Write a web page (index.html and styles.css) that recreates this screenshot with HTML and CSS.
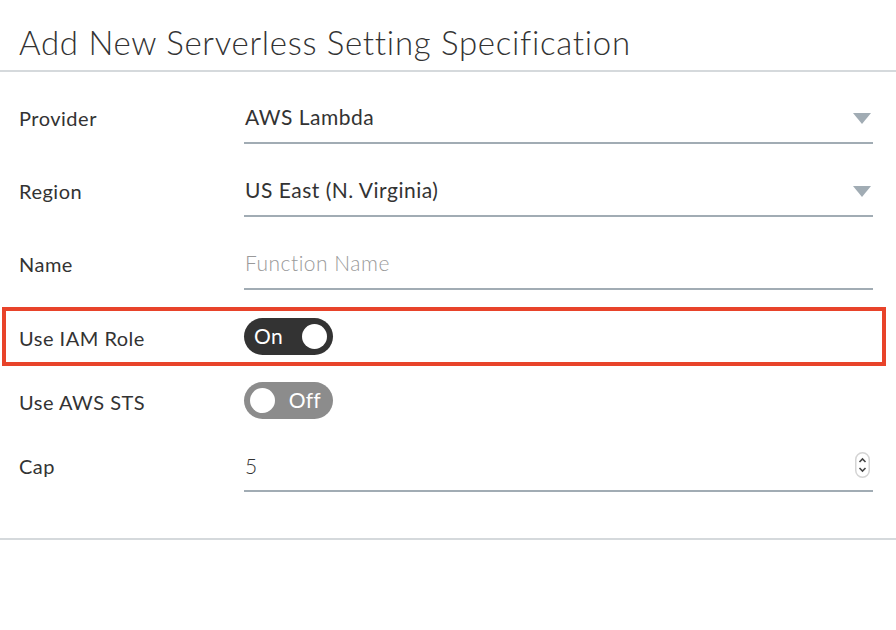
FILE: index.html
```html
<!DOCTYPE html>
<html>
<head>
<meta charset="utf-8">
<link rel="stylesheet" href="styles.css">
</head>
<body>
<div class="dialog">
  <header class="head"><h1 class="title">Add New Serverless Setting Specification</h1></header>
  <form class="form">
    <div class="row field-row">
      <label class="label">Provider</label>
      <div class="field select">
        <span class="value">AWS Lambda</span>
        <span class="caret"></span>
      </div>
    </div>
    <div class="row field-row">
      <label class="label">Region</label>
      <div class="field select">
        <span class="value">US East (N. Virginia)</span>
        <span class="caret"></span>
      </div>
    </div>
    <div class="row field-row">
      <label class="label">Name</label>
      <div class="field">
        <span class="value placeholder">Function Name</span>
      </div>
    </div>
    <div class="row toggle-row highlight">
      <label class="label">Use IAM Role</label>
      <div class="toggle on"><span class="t-text">On</span><span class="knob"></span></div>
    </div>
    <div class="row toggle-row sts">
      <label class="label">Use AWS STS</label>
      <div class="toggle off"><span class="knob"></span><span class="t-text">Off</span></div>
    </div>
    <div class="row field-row cap">
      <label class="label">Cap</label>
      <div class="field">
        <span class="value num">5</span>
        <span class="spinner">
          <svg width="15" height="26" viewBox="0 0 15 26">
            <rect x="0.75" y="0.75" width="13.5" height="24.5" rx="6.75" fill="#fff" stroke="#d4d4d4" stroke-width="1.5"/>
            <path d="M4.5 10 L7.5 7 L10.5 10" fill="none" stroke="#444" stroke-width="1.6"/>
            <path d="M4.5 16 L7.5 19 L10.5 16" fill="none" stroke="#444" stroke-width="1.6"/>
          </svg>
        </span>
      </div>
    </div>
  </form>
  <div class="foot"></div>
</div>
</body>
</html>
```
FILE: styles.css
```css
* { box-sizing: border-box; }
html, body { margin: 0; padding: 0; background: #fff; }
body {
  font-family: Lato, "Open Sans", "Liberation Sans", sans-serif;
  color: #333;
  width: 896px;
  height: 630px;
  overflow: hidden;
}
.head {
  height: 72px;
  border-bottom: 2px solid #d5d9dc;
  padding-left: 19px;
}
.title {
  margin: 0;
  padding-top: 22px;
  font-size: 33px;
  line-height: 40px;
  font-weight: 300;
  color: #333;
  letter-spacing: 0.7px;
}
.form {
  padding-top: 28px;
}
.row {
  display: grid;
  grid-template-columns: 225px 1fr;
  align-items: center;
  padding-left: 19px;
  padding-right: 23px;
}
.label {
  font-size: 20px;
  color: #333;
  letter-spacing: 0.5px;
}
.field-row { height: 44px; margin-bottom: 29px; }
.field-row .label { margin-top: -8px; }
.field {
  position: relative;
  height: 44px;
  border-bottom: 2px solid #a1acb4;
  display: flex;
  align-items: center;
  padding-left: 1px;
}
.value {
  font-size: 21px;
  color: #333;
  margin-top: -10px;
  letter-spacing: 0.5px;
}
.placeholder { color: #9a9a9a; font-weight: 300; }
.num { font-weight: 300; }
.caret {
  position: absolute;
  right: 2px;
  top: 13px;
  width: 0;
  height: 0;
  border-left: 9px solid transparent;
  border-right: 9px solid transparent;
  border-top: 11px solid #a1acb4;
}
.highlight {
  margin: -12px 10px 0 2px;
  border: 4px solid #e8432a;
  padding-left: 13px;
  height: 59px;
  padding-right: 0;
}
.highlight .label, .sts .label { padding-top: 2px; }
.toggle {
  width: 89px;
  height: 37px;
  border-radius: 19px;
  display: flex;
  align-items: center;
  color: #fff;
  font-size: 21px;
  letter-spacing: 0.3px;
  padding: 0 6px 0 10px;
}
.toggle.on { background: #333; justify-content: space-between; }
.toggle.off { background: #8c8c8c; justify-content: space-between; padding: 0 12px 0 6px; }
.t-text { margin-top: -3px; }
.knob {
  width: 25px;
  height: 25px;
  border-radius: 50%;
  background: #fff;
}
.sts { height: 36px; margin-top: 16px; }
.cap { margin-top: 30px; margin-bottom: 0; }
.cap .value { margin-top: -8px; }
.spinner {
  position: absolute;
  right: 3px;
  top: 4px;
  display: block;
  height: 26px;
}
.spinner svg { display: block; }
.foot {
  margin-top: 46px;
  border-top: 2px solid #d5d9dc;
}
```
